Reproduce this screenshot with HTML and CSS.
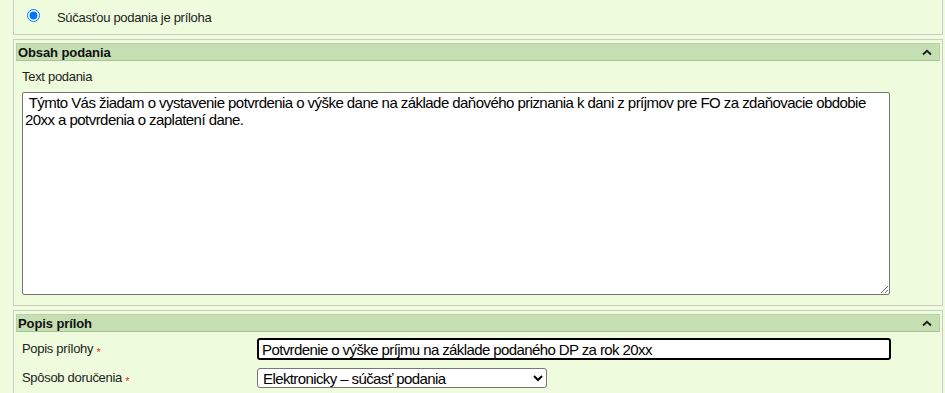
FILE: index.html
```html
<!DOCTYPE html>
<html lang="sk">
  <head>
    <meta charset="UTF-8" />
    <meta name="viewport" content="width=device-width, initial-scale=1.0" />
    <title>Podanie</title>
    <link rel="stylesheet" href="styles.css">
  </head>
  <body>
    <div class="page">
      <div class="panel panel-top">
        <label class="radio-row">
          <input type="radio" name="priloha" checked />
          <span>Súčasťou podania je príloha</span>
        </label>
      </div>

      <div class="panel">
        <div class="panel-header">
          <span>Obsah podania</span>
          <svg class="toggle" width="10" height="7" viewBox="0 0 10 7"><path d="M1 5.5 L5 1.8 L9 5.5" fill="none" stroke="#222" stroke-width="2" /></svg>
        </div>
        <div class="panel-body">
          <label class="field-label" for="text">Text podania</label>
          <textarea id="text" class="text-area"> Týmto Vás žiadam o vystavenie potvrdenia o výške dane na základe daňového priznania k dani z príjmov pre FO za zdaňovacie obdobie 20xx a potvrdenia o zaplatení dane.</textarea>
        </div>
      </div>

      <div class="panel">
        <div class="panel-header">
          <span>Popis príloh</span>
          <svg class="toggle" width="10" height="7" viewBox="0 0 10 7"><path d="M1 5.5 L5 1.8 L9 5.5" fill="none" stroke="#222" stroke-width="2" /></svg>
        </div>
        <div class="panel-body">
          <div class="form-row">
            <label class="row-label" for="popis">Popis prílohy <span class="req">*</span></label>
            <input type="text" id="popis" class="form-input" value="Potvrdenie o výške príjmu na základe podaného DP za rok 20xx" />
          </div>
          <div class="form-row">
            <label class="row-label" for="sposob">Spôsob doručenia <span class="req">*</span></label>
            <select id="sposob" class="form-select">
              <option>Elektronicky – súčasť podania</option>
              <option>Poštou</option>
            </select>
          </div>
        </div>
      </div>
    </div>
  </body>
</html>
```

FILE: styles.css
```css
body {
  margin: 0;
  background: #eefbdc;
  font-family: "Liberation Sans", Arial, sans-serif;
  font-size: 13px;
  letter-spacing: -0.3px;
  color: #222;
}
.page {
  padding: 0 2px 0 13px;
}
.panel {
  background: #eefbdc;
  border: 1px solid #c7cec1;
  padding: 3px 2px 4px 2px;
  margin-bottom: 4px;
}
.panel-top {
  border-top: none;
  height: 34px;
  padding: 0;
}
.radio-row {
  display: flex;
  align-items: center;
  height: 34px;
  padding-left: 13px;
}
.radio-row input {
  margin: 0 17px 0 0;
  width: 13px;
  height: 13px;
  position: relative;
  top: -2px;
}
.panel-header {
  display: flex;
  align-items: center;
  justify-content: space-between;
  height: 16px;
  background: #c5dfb3;
  border: 1px solid #b9d1a8;
  border-bottom-color: #a9c498;
  padding: 0 0 0 1px;
  font-weight: bold;
  letter-spacing: -0.1px;
  color: #111;
}
.toggle {
  margin-right: 7px;
}
.panel-body {
  padding: 6px 0 6px 6px;
}
.field-label {
  display: block;
  margin-bottom: 6px;
  line-height: 19px;
}
.text-area {
  display: block;
  box-sizing: border-box;
  width: 868px;
  height: 203px;
  margin: 0;
  padding: 1px 2px;
  border: 1px solid #767676;
  border-radius: 2px;
  font-family: "Liberation Sans", Arial, sans-serif;
  font-size: 15px;
  letter-spacing: -0.55px;
  line-height: 17px;
  color: #000;
  background: #fff;
}
.form-row {
  display: flex;
  align-items: center;
  margin-bottom: 8px;
}
.form-row:last-child {
  margin-bottom: 0;
}
.row-label {
  width: 235px;
  flex: none;
}
.req {
  color: #e0302b;
  font-size: 11px;
  vertical-align: -3px;
}
.form-input {
  box-sizing: border-box;
  width: 634px;
  height: 22px;
  margin: 0;
  padding: 0 3px;
  border: 2px solid #000;
  border-radius: 3px;
  font-family: "Liberation Sans", Arial, sans-serif;
  font-size: 15px;
  letter-spacing: -0.6px;
  color: #000;
  background: #fff;
  outline: none;
}
.form-select {
  box-sizing: border-box;
  width: 290px;
  height: 20px;
  margin: 0;
  padding: 0 1px;
  border: 1px solid #767676;
  border-radius: 3px;
  font-family: "Liberation Sans", Arial, sans-serif;
  font-size: 15px;
  letter-spacing: -0.6px;
  color: #000;
  background: #fff;
}
```
